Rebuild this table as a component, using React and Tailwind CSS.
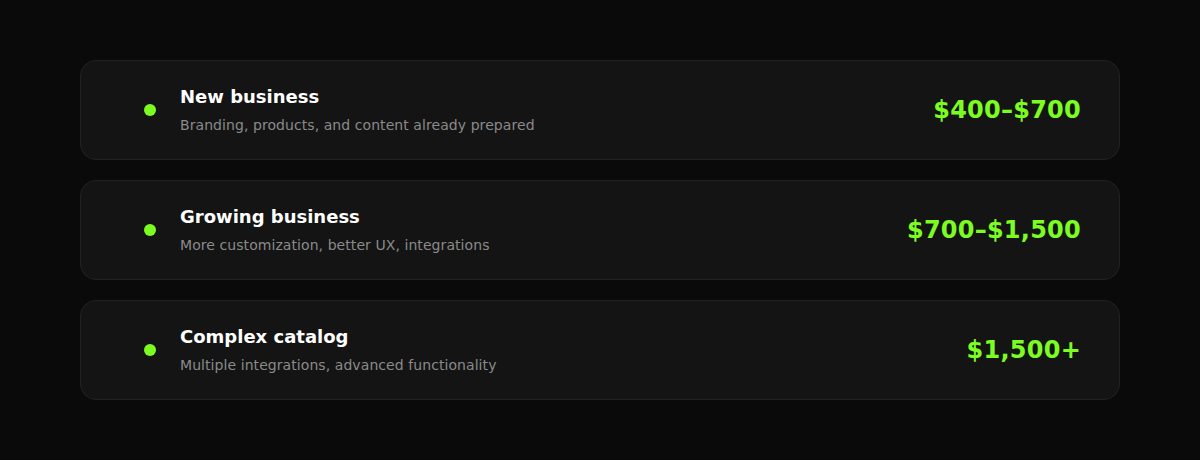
import React from "react";

const tiers = [
  { title: "New business", desc: "Branding, products, and content already prepared", price: "$400–$700" },
  { title: "Growing business", desc: "More customization, better UX, integrations", price: "$700–$1,500" },
  { title: "Complex catalog", desc: "Multiple integrations, advanced functionality", price: "$1,500+" },
];

export default function App() {
  return (
    <div className="min-h-[460px] bg-[#0a0a0a] px-20 pt-[60px] font-['DejaVu_Sans',sans-serif]">
      <div className="flex flex-col gap-5">
        {tiers.map((t) => (
          <div
            key={t.title}
            className="flex h-[100px] items-center rounded-2xl border border-[#222222] bg-[#141414] pl-[63px] pr-[38px]"
          >
            <span className="h-3 w-3 shrink-0 rounded-full bg-[#7dfc22]" />
            <div className="ml-6 flex-1 pb-[2px]">
              <h3 className="text-lg font-bold leading-7 text-white">{t.title}</h3>
              <p className="mt-1 text-sm leading-5 tracking-[0.005em] text-[#8a8a8a]">{t.desc}</p>
            </div>
            <div className="text-2xl font-bold tracking-[0.01em] text-[#7dfc22]">{t.price}</div>
          </div>
        ))}
      </div>
    </div>
  );
}
